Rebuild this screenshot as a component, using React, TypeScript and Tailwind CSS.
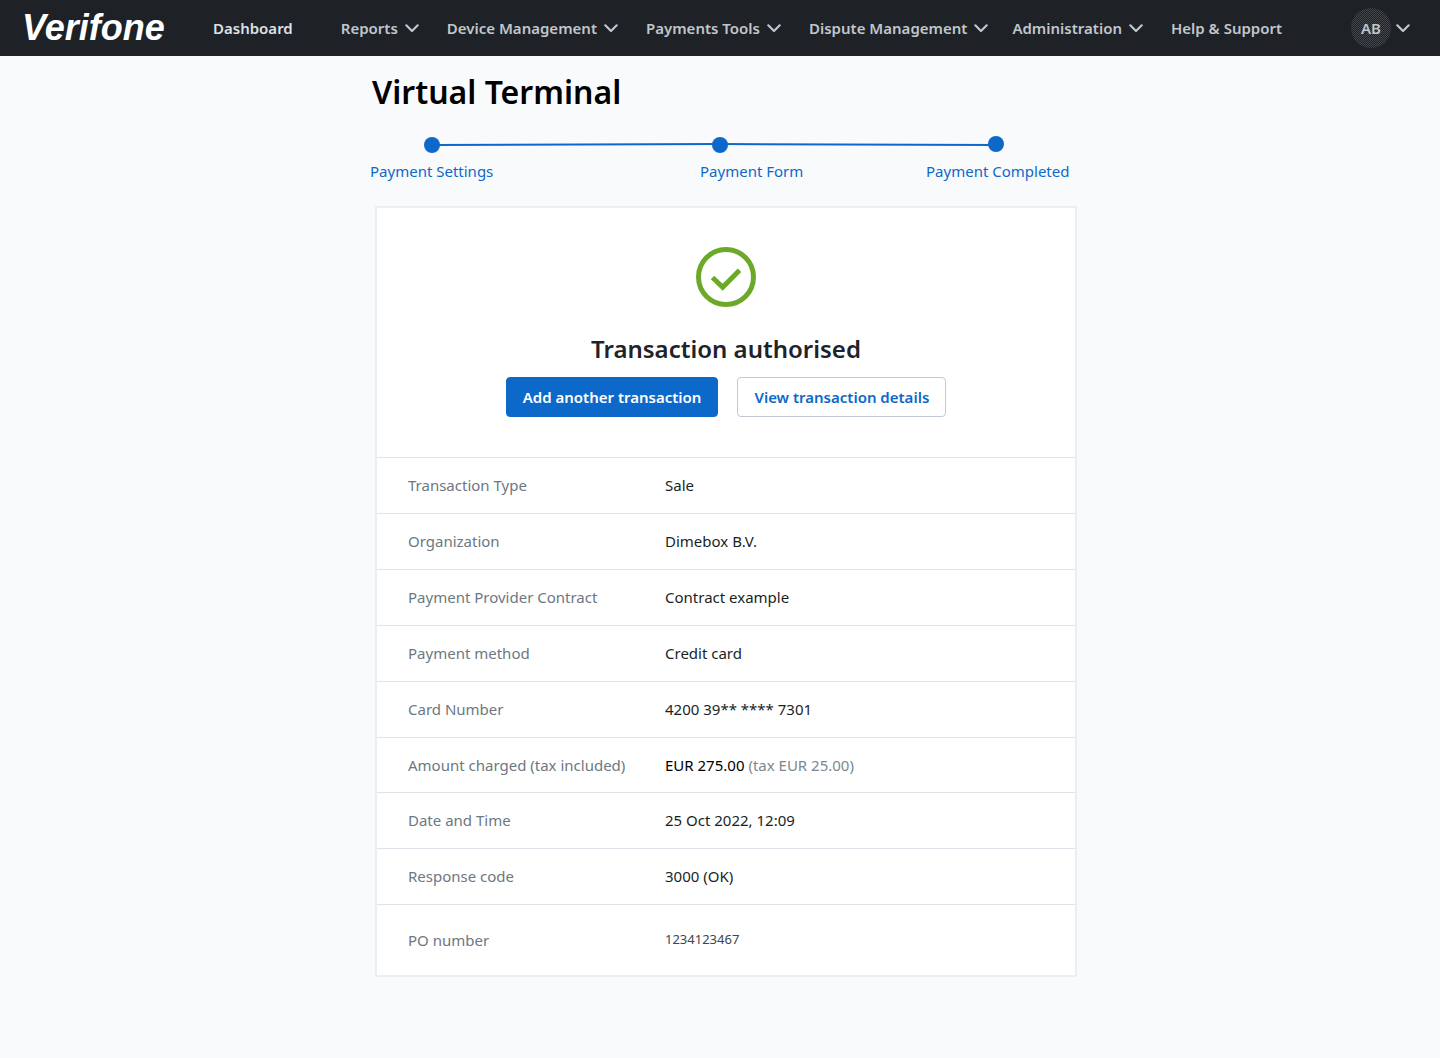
import React from "react";

type MenuItem = { label: string; spacing?: string };

const menuItems: MenuItem[] = [
  { label: "Reports" },
  { label: "Device Management" },
  { label: "Payments Tools" },
  { label: "Dispute Management" },
  { label: "Administration", spacing: "-ml-1" },
];

function Chevron() {
  return (
    <svg width="14" height="9" viewBox="0 0 14 9" fill="none" aria-hidden="true">
      <path d="M1.3 1.3 7 7l5.700-5.700" stroke="currentColor" strokeWidth="2.200" strokeLinecap="round" strokeLinejoin="round" />
    </svg>
  );
}

function Header() {
  return (
    <header className="flex h-14 items-center bg-[#1e2125] pr-[30px] pl-[22px] text-[15px] font-semibold text-[#c0c6cc]">
      <a href="#home" className="w-[191px] shrink-0 font-['Liberation_Sans'] text-[36px] leading-none font-bold text-white italic">
        Verifone
      </a>
      <nav className="flex items-center gap-7 whitespace-nowrap">
        <a href="#dashboard" className="mr-5 text-[#dce1e6]">
          Dashboard
        </a>
        {menuItems.map((item) => (
          <button key={item.label} type="button" className={`flex items-center gap-[7px] ${item.spacing ?? ""}`}>
            {item.label}
            <Chevron />
          </button>
        ))}
        <a href="#help">Help &amp; Support</a>
      </nav>
      <button type="button" className="ml-auto flex items-center gap-[5px]">
        <span className="flex size-10 items-center justify-center rounded-full bg-[repeating-conic-gradient(#44484c_0_25%,#1e2125_0_50%)] bg-[length:2px_2px]">
          AB
        </span>
        <Chevron />
      </button>
    </header>
  );
}

function Steps() {
  return (
    <section aria-label="Progress" className="mt-[23px] px-[7px] text-[15px] leading-5 text-[#0d69c9]">
      <svg className="w-full" viewBox="0 0 700 18" fill="none" aria-hidden="true">
        <path d="M62 10 350 9 626 10" stroke="#0d69c9" strokeWidth="2" />
        <circle cx="62" cy="10" r="8" fill="#0d69c9" />
        <circle cx="350" cy="10" r="8" fill="#0d69c9" />
        <circle cx="626" cy="9" r="8" fill="#0d69c9" />
      </svg>
      <ol className="mt-2 grid grid-cols-[330fr_226fr_144fr] whitespace-nowrap">
        <li>Payment Settings</li>
        <li>Payment Form</li>
        <li>Payment Completed</li>
      </ol>
    </section>
  );
}

type Row = { label: string; value: React.ReactNode; height?: string; cell?: string };

const rows: Row[] = [
  { label: "Transaction Type", value: "Sale" },
  { label: "Organization", value: "Dimebox B.V." },
  { label: "Payment Provider Contract", value: "Contract example" },
  { label: "Payment method", value: "Credit card" },
  { label: "Card Number", value: "4200 39** **** 7301" },
  {
    label: "Amount charged (tax included)",
    value: (
      <>
        <span className="text-black">EUR 275.00</span> <span className="text-[#7c8790]">(tax EUR 25.00)</span>
      </>
    ),
    height: "h-[55px]",
  },
  { label: "Date and Time", value: "25 Oct 2022, 12:09" },
  { label: "Response code", value: "3000 (OK)" },
  { label: "PO number", value: "1234123467", height: "h-[71px]", cell: "text-[13px] text-[#3d454d]" },
];

function ResultCard() {
  return (
    <section className="mt-[25px] ml-3 border-2 border-[#ebeff3] bg-white">
      <div className="flex flex-col items-center pt-[39px] pb-10">
        <svg width="60" height="60" viewBox="0 0 60 60" fill="none" stroke="#6ca928" aria-hidden="true">
          <circle cx="30" cy="30" r="27.500" strokeWidth="5" />
          <path d="M16.500 30.500 26.700 40.200 43.500 23.200" strokeWidth="5" />
        </svg>
        <h2 className="mt-[26px] text-2xl leading-8 font-semibold text-[#1e2329]">Transaction authorised</h2>
        <div className="mt-3 flex gap-[19px] text-[15px] font-semibold">
          <button type="button" className="h-10 rounded border border-[#0d69c9] bg-[#0d69c9] px-4 text-white">
            Add another transaction
          </button>
          <button type="button" className="h-10 rounded border border-[#c3c9d2] bg-white px-4 text-[#0d69c9]">
            View transaction details
          </button>
        </div>
      </div>
      <table className="w-full border-separate border-spacing-0 text-left text-[15px]">
        <tbody>
          {rows.map((row) => (
            <tr key={row.label} className={row.height ?? "h-14"}>
              <th scope="row" className="w-72 border-t border-[#dee4e9] pl-[31px] font-normal text-[#6c7883]">
                {row.label}
              </th>
              <td className={`border-t border-[#dee4e9] ${row.cell ?? "text-[#1a1f25]"}`}>{row.value}</td>
            </tr>
          ))}
        </tbody>
      </table>
    </section>
  );
}

export default function App() {
  return (
    <div className="min-h-screen bg-[#f9fafc] font-['Noto_Sans',sans-serif]">
      <Header />
      <main className="mx-auto max-w-[714px] pt-4 pb-20">
        <h1 className="pl-[9px] text-[32px] leading-10 font-semibold text-black">Virtual Terminal</h1>
        <Steps />
        <ResultCard />
      </main>
    </div>
  );
}
